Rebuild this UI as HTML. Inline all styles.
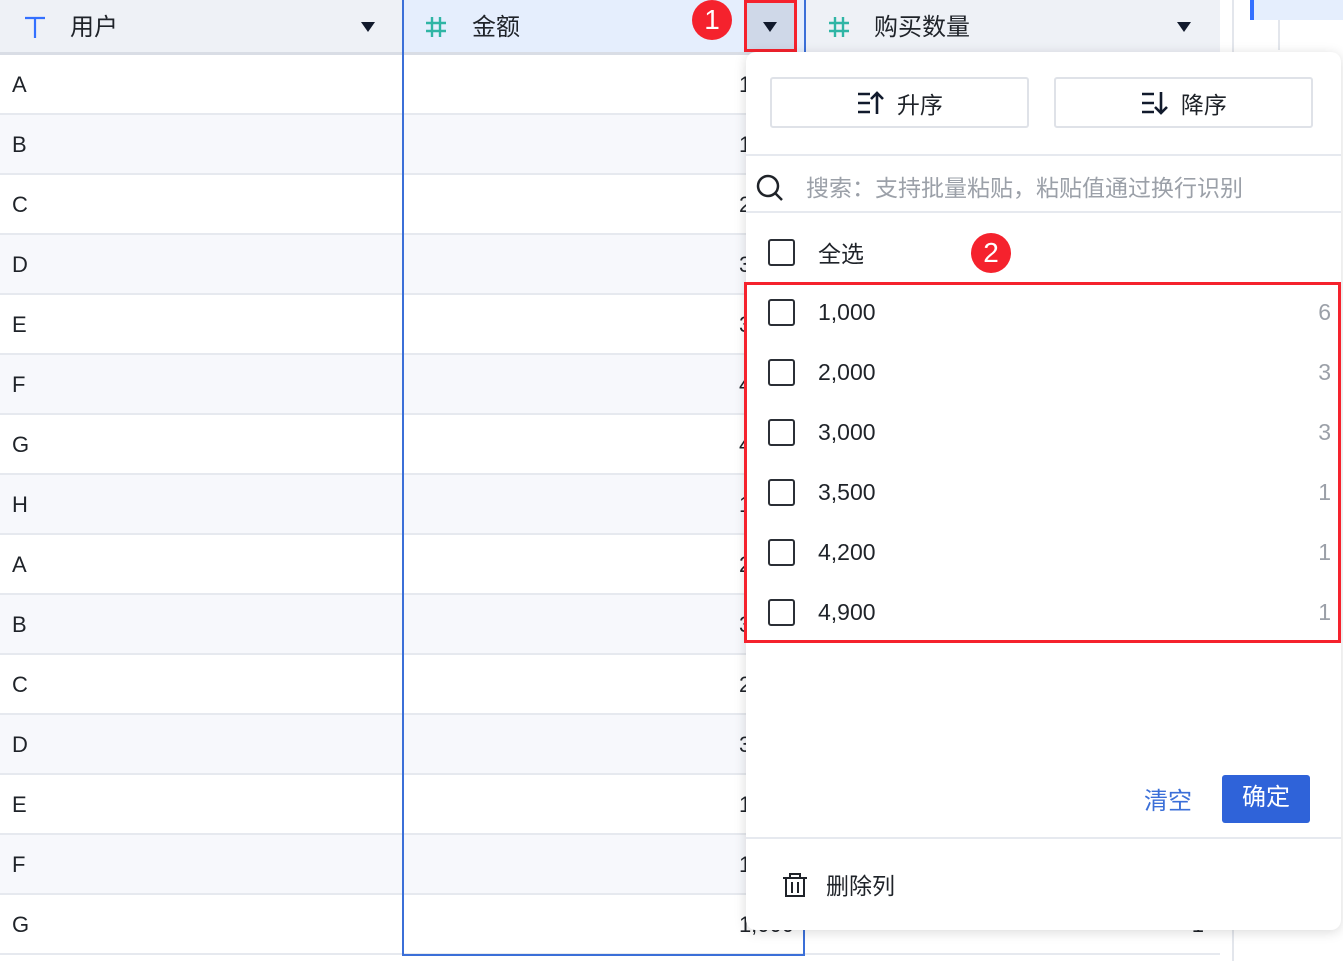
<!DOCTYPE html>
<html><head><meta charset="utf-8"><style>
*{box-sizing:border-box;margin:0;padding:0}
body{width:1343px;height:961px;overflow:hidden;background:#fff;font-family:"Liberation Sans","Noto Sans CJK SC",sans-serif;color:#1f2329;position:relative}
.abs{position:absolute}
.hdr{position:absolute;top:0;height:55px;background:#eef1f6;border-bottom:3px solid #d9dde5;font-size:24px}
.hdr span{position:absolute;top:7px}
.row{position:absolute;left:0;width:1220px;height:60px;border-bottom:2px solid #e6e9ef;font-size:22px}
.row span{position:absolute;top:17px}
.tri{position:absolute;width:0;height:0;border-left:7px solid transparent;border-right:7px solid transparent;border-top:10px solid #111a2c}
.pop{position:absolute;left:746px;top:52px;width:595px;height:878px;background:#fff;border-radius:10px;box-shadow:0 2px 12px rgba(0,0,0,.15)}
.btn{position:absolute;top:25px;width:259px;height:51px;border:2px solid #dfe2e8;border-radius:3px;font-size:23px;display:flex;align-items:center;justify-content:center}
.cb{position:absolute;left:22px;width:27px;height:27px;border:2px solid #2b2f36;border-radius:3px}
.it{position:absolute;left:0;width:595px;height:60px;font-size:23px}
.it .t{position:absolute;left:72px;top:17px}
.it .n{position:absolute;right:10px;top:17px;color:#9ba0a8}
.badge{position:absolute;width:40px;height:40px;border-radius:50%;background:#f5222d;color:#fff;font-size:28px;text-align:center;line-height:40px}
</style></head><body>
<div id="rows"></div>
<div class="hdr" style="left:0;width:403px"><svg class="abs" style="left:24px;top:16px" width="22" height="22" viewBox="0 0 22 22"><path d="M1 2h20M11 2v20" stroke="#3370ff" stroke-width="2.2"/></svg><span style="left:70px">用户</span></div>
<div class="tri" style="left:361px;top:22px"></div>
<div class="hdr" style="left:403px;width:403px;background:#e5eefd"><svg class="abs" style="left:22px;top:16px" width="22" height="22" viewBox="0 0 22 22"><path d="M7 1v20M15 1v20M1 7h20M1 15h20" stroke="#2fb5a5" stroke-width="2.4"/></svg><span style="left:69px">金额</span></div>
<div class="hdr" style="left:806px;width:414px"><svg class="abs" style="left:22px;top:16px" width="22" height="22" viewBox="0 0 22 22"><path d="M7 1v20M15 1v20M1 7h20M1 15h20" stroke="#2fb5a5" stroke-width="2.4"/></svg><span style="left:68px">购买数量</span></div>
<div class="tri" style="left:1177px;top:22px"></div>
<div class="abs" style="left:744px;top:0;width:53px;height:52px;background:#cfd8e8;border:3px solid #f5222d"></div>
<div class="tri" style="left:763px;top:22px"></div>
<div class="badge" style="left:692px;top:0">1</div>
<div class="abs" style="left:1232px;top:0;width:2px;height:961px;background:#e3e6ec"></div>
<div class="abs" style="left:1278px;top:0;width:2px;height:50px;background:#e3e6ec"></div>
<div class="abs" style="left:1250px;top:0;width:93px;height:20px;background:#e5eefd;border-left:4px solid #3370ff"></div>

<div class="abs" style="left:402px;top:55px;width:403px;height:901px;border:2px solid #3b6fd8;border-top:none"></div>
<div class="abs" style="left:402px;top:0;width:2px;height:55px;background:#3b6fd8"></div>
<div class="abs" style="left:804px;top:0;width:2px;height:55px;background:#3b6fd8"></div>

<div class="pop">
 <div class="btn" style="left:24px"><svg width="28" height="26" viewBox="0 0 28 26"><path d="M2 4h12M2 13h12M2 22h12M21 24V3M15 9l6-6 6 6" fill="none" stroke="#111a2c" stroke-width="2.6"/></svg>&nbsp; 升序</div>
 <div class="btn" style="left:308px"><svg width="28" height="26" viewBox="0 0 28 26"><path d="M2 4h12M2 13h12M2 22h12M21 2v21M15 17l6 6 6-6" fill="none" stroke="#111a2c" stroke-width="2.6"/></svg>&nbsp; 降序</div>
 <div class="abs" style="left:0;top:102px;width:595px;height:2px;background:#e6e9ef"></div>
 <svg class="abs" style="left:8px;top:120px" width="32" height="32" viewBox="0 0 32 32"><circle cx="14" cy="14" r="10" fill="none" stroke="#1f2329" stroke-width="2.5"/><path d="M21 21l7 7" stroke="#1f2329" stroke-width="2.5"/></svg>
 <div class="abs" style="left:60px;top:117px;font-size:23px;color:#9ba0a8">搜索：支持批量粘贴，粘贴值通过换行识别</div>
 <div class="abs" style="left:0;top:159px;width:595px;height:2px;background:#e6e9ef"></div>
 <div class="it" style="top:170px"><div class="cb" style="top:17px"></div><span class="t" style="top:13px">全选</span></div>
 <div class="badge" style="left:225px;top:181px">2</div>
 <div class="it" style="top:230px"><div class="cb" style="top:17px"></div><span class="t">1,000</span><span class="n">6</span></div>
 <div class="it" style="top:290px"><div class="cb" style="top:17px"></div><span class="t">2,000</span><span class="n">3</span></div>
 <div class="it" style="top:350px"><div class="cb" style="top:17px"></div><span class="t">3,000</span><span class="n">3</span></div>
 <div class="it" style="top:410px"><div class="cb" style="top:17px"></div><span class="t">3,500</span><span class="n">1</span></div>
 <div class="it" style="top:470px"><div class="cb" style="top:17px"></div><span class="t">4,200</span><span class="n">1</span></div>
 <div class="it" style="top:530px"><div class="cb" style="top:17px"></div><span class="t">4,900</span><span class="n">1</span></div>
 <div class="abs" style="left:-2px;top:230px;width:597px;height:361px;border:3px solid #f5222d"></div>
 <div class="abs" style="left:398px;top:729px;font-size:24px;color:#3b6fd8">清空</div>
 <div class="abs" style="left:476px;top:723px;width:88px;height:48px;background:#2f63d9;border-radius:3px;color:#fff;font-size:24px;text-align:center;line-height:46px">确定</div>
 <div class="abs" style="left:0;top:785px;width:595px;height:2px;background:#e6e9ef"></div>
 <svg class="abs" style="left:36px;top:820px" width="26" height="26" viewBox="0 0 26 26"><path d="M1 6h24M8 6V2h10v4M4 6v18h18V6M10 10v11M16 10v11" fill="none" stroke="#1f2329" stroke-width="2"/></svg>
 <div class="abs" style="left:80px;top:815px;font-size:23px">删除列</div>
</div>
<script>
var u="ABCDEFGHABCDEFG".split(""),v=["1,000","1,000","2,000","3,000","3,500","4,200","4,900","1,000","2,000","3,000","2,000","3,000","1,000","1,000","1,000"],h="";
for(var i=0;i<15;i++){h+='<div class="row" style="top:'+(55+i*60)+'px;background:'+(i%2?'#f7f8fc':'#fff')+'"><span style="left:12px">'+u[i]+'</span><span style="right:426px">'+v[i]+'</span><span style="right:16px">1</span></div>';}
document.getElementById("rows").innerHTML=h;
</script>
</body></html>
